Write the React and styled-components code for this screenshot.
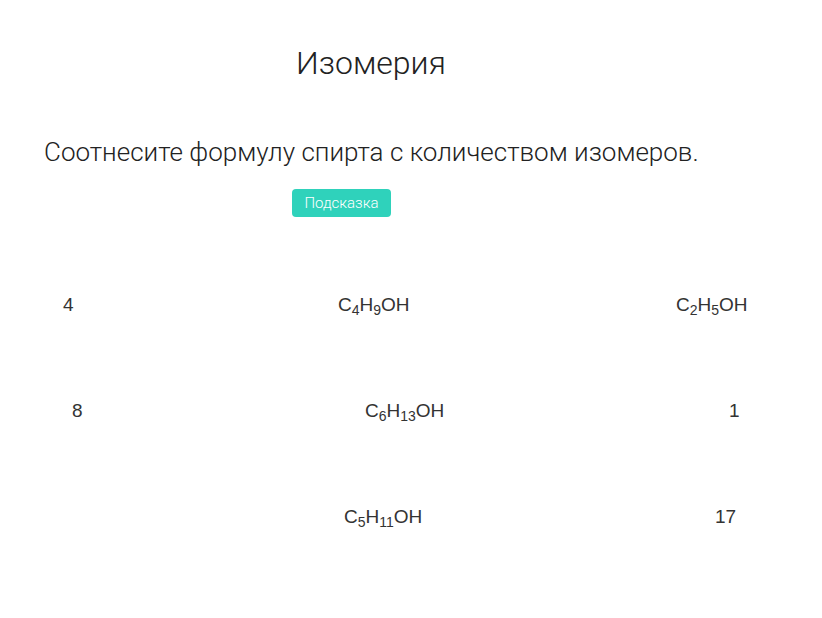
import React from "react";
import styled, { createGlobalStyle } from "styled-components";

const Global = createGlobalStyle`
  html, body {
    margin: 0;
    padding: 0;
    background: #fff;
  }
  body {
    font-family: Roboto, "Liberation Sans", Arial, sans-serif;
    color: #333;
  }
`;

const Page = styled.div`
  width: 822px;
  min-height: 618px;
  padding: 0 0 0 44px;
  box-sizing: border-box;
`;

const Header = styled.div`
  width: 740px;
`;

const Title = styled.h1`
  margin: 0;
  padding-top: 41px;
  padding-left: 252px;
  font-size: 32px;
  font-weight: 300;
  line-height: 44px;
  color: #222;
`;

const Task = styled.p`
  margin: 52px 0 0;
  font-size: 26px;
  font-weight: 300;
  line-height: 30px;
  color: #222;
  white-space: nowrap;
`;

const HintButton = styled.button`
  display: block;
  margin: 22px 0 0 248px;
  height: 28px;
  width: 99px;
  border: none;
  border-radius: 4px;
  background: #2fd2bb;
  color: #fff;
  font-family: Roboto, "Liberation Sans", Arial, sans-serif;
  font-size: 15px;
  font-weight: 300;
  padding: 0;
  cursor: pointer;
`;

const Board = styled.div`
  display: grid;
  grid-template-columns: 270px 320px 1fr;
  grid-auto-rows: 106px;
  margin-top: 76px;
`;

const Cell = styled.div`
  font-family: "Liberation Sans", Arial, sans-serif;
  font-size: 19px;
  line-height: 24px;
  color: #333;
  padding-left: ${(p) => p.$dx}px;
  white-space: nowrap;
`;

const Sub = styled.sub`
  font-size: 14px;
  vertical-align: -4px;
  line-height: 0;
`;

const Formula = ({ parts }) => (
  <>
    {parts.map((p, i) =>
      typeof p === "number" ? <Sub key={i}>{p}</Sub> : <span key={i}>{p}</span>
    )}
  </>
);

const cells = [
  { dx: 19, content: "4" },
  { dx: 24, content: ["C", 4, "H", 9, "OH"] },
  { dx: 42, content: ["C", 2, "H", 5, "OH"] },
  { dx: 28, content: "8" },
  { dx: 51, content: ["C", 6, "H", 13, "OH"] },
  { dx: 95, content: "1" },
  { dx: 0, content: "" },
  { dx: 30, content: ["C", 5, "H", 11, "OH"] },
  { dx: 81, content: "17" },
];

export default function App() {
  return (
    <>
      <Global />
      <Page>
        <Header>
          <Title>Изомерия</Title>
          <Task>Соотнесите формулу спирта с количеством изомеров.</Task>
        </Header>
        <HintButton>Подсказка</HintButton>
        <Board>
          {cells.map((c, i) => (
            <Cell key={i} $dx={c.dx}>
              {Array.isArray(c.content) ? <Formula parts={c.content} /> : c.content}
            </Cell>
          ))}
        </Board>
      </Page>
    </>
  );
}
